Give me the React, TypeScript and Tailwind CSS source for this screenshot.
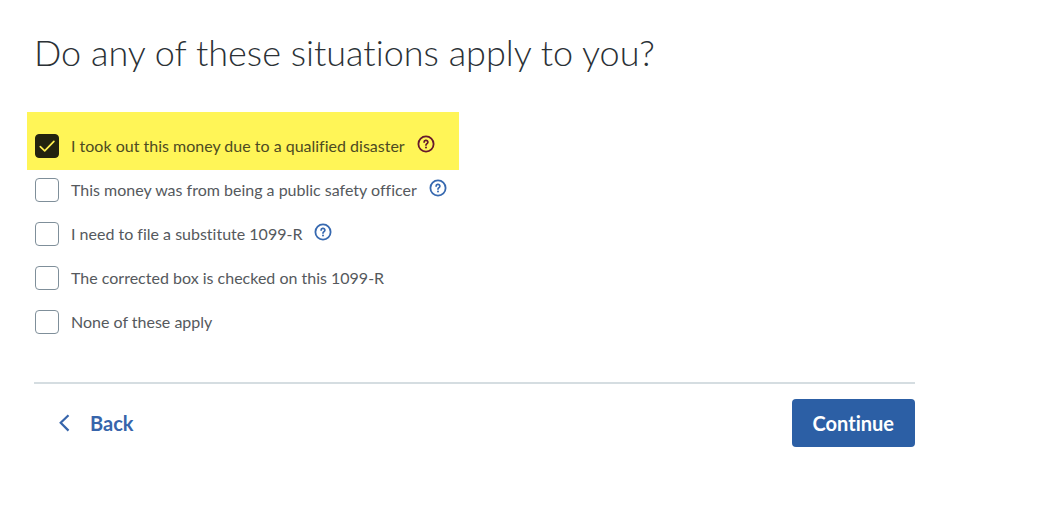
import { useState } from "react";
import { clsx } from "clsx";

interface Situation {
  id: string;
  label: string;
  hasHelp?: boolean;
  highlighted?: boolean;
}

const situations: Situation[] = [
  {
    id: "disaster",
    label: "I took out this money due to a qualified disaster",
    hasHelp: true,
    highlighted: true,
  },
  {
    id: "safety-officer",
    label: "This money was from being a public safety officer",
    hasHelp: true,
  },
  { id: "substitute", label: "I need to file a substitute 1099-R", hasHelp: true },
  { id: "corrected", label: "The corrected box is checked on this 1099-R" },
  { id: "none", label: "None of these apply" },
];

function HelpIcon() {
  return (
    <svg viewBox="0 0 18 18" className="h-[18px] w-[18px]" fill="none" stroke="currentColor">
      <circle cx="9" cy="9" r="7.6" strokeWidth="1.8" />
      <path
        d="M7.1 7.1a1.9 1.8 0 1 1 2.8 1.6c-.6.4-.9.7-.9 1.4"
        strokeWidth="1.7"
        strokeLinecap="round"
      />
      <circle cx="9" cy="12.4" r="1" fill="currentColor" stroke="none" />
    </svg>
  );
}

interface SituationRowProps {
  situation: Situation;
  checked: boolean;
  onToggle: () => void;
}

function SituationRow({ situation, checked, onToggle }: SituationRowProps) {
  const { id, label, hasHelp, highlighted } = situation;

  return (
    <li
      className={clsx(
        "flex w-fit items-center px-2",
        highlighted && "-mb-3 bg-[#fff557] pr-6 pt-[22px] pb-3"
      )}
    >
      <span className="grid">
        <input
          id={id}
          type="checkbox"
          checked={checked}
          onChange={onToggle}
          className={clsx(
            "col-start-1 row-start-1 h-6 w-6 appearance-none rounded border border-[#7f8f9a] bg-white",
            highlighted
              ? "checked:border-[#23230f] checked:bg-[#23230f]"
              : "checked:border-[#2c5fa5] checked:bg-[#2c5fa5]"
          )}
        />
        {checked && (
          <svg
            viewBox="0 0 24 24"
            className={clsx(
              "pointer-events-none col-start-1 row-start-1 h-6 w-6",
              highlighted ? "text-[#fff04f]" : "text-white"
            )}
            fill="none"
            stroke="currentColor"
            strokeWidth="1.7"
            strokeLinecap="round"
            strokeLinejoin="round"
          >
            <path d="M5.3 12.6l4.4 4.2 9.2-9.4" />
          </svg>
        )}
      </span>
      <label
        htmlFor={id}
        className={clsx("pl-3 text-base leading-6", highlighted ? "text-[#4d4b22]" : "text-[#55595d]")}
      >
        {label}
      </label>
      {hasHelp && (
        <button
          type="button"
          aria-label={`Help: ${label}`}
          className={clsx("mb-1 ml-3", highlighted ? "text-[#66182c]" : "text-[#3769b0]")}
        >
          <HelpIcon />
        </button>
      )}
    </li>
  );
}

export default function App() {
  const [selected, setSelected] = useState<string[]>(["disaster"]);

  const toggle = (id: string) => {
    setSelected((prev) =>
      prev.includes(id) ? prev.filter((item) => item !== id) : [...prev, id]
    );
  };

  return (
    <main className="min-h-screen bg-white font-['Lato',sans-serif] [font-variant-ligatures:none]">
      <form
        className="max-w-[915px] pt-8 pl-[34px]"
        onSubmit={(event) => event.preventDefault()}
      >
        <h1 className="text-4xl leading-10 font-light text-[#2b3136]">
          Do any of these situations apply to you?
        </h1>

        <ul className="mt-10 -ml-[7px] flex flex-col gap-5">
          {situations.map((situation) => (
            <SituationRow
              key={situation.id}
              situation={situation}
              checked={selected.includes(situation.id)}
              onToggle={() => toggle(situation.id)}
            />
          ))}
        </ul>

        <div className="mt-12 flex items-center justify-between border-t-2 border-[#d5dde1] pt-[15px]">
          <button
            type="button"
            className="flex items-center gap-5 pl-6 text-xl font-bold text-[#3765ab]"
          >
            <svg
              viewBox="0 0 12 18"
              className="h-[18px] w-3"
              fill="none"
              stroke="currentColor"
              strokeWidth="2.2"
            >
              <path d="M10.5 1.2L2.7 8.8l7.8 7.8" />
            </svg>
            Back
          </button>
          <button
            type="submit"
            className="h-12 rounded bg-[#2c5fa5] px-[21px] text-xl font-bold text-white"
          >
            Continue
          </button>
        </div>
      </form>
    </main>
  );
}
